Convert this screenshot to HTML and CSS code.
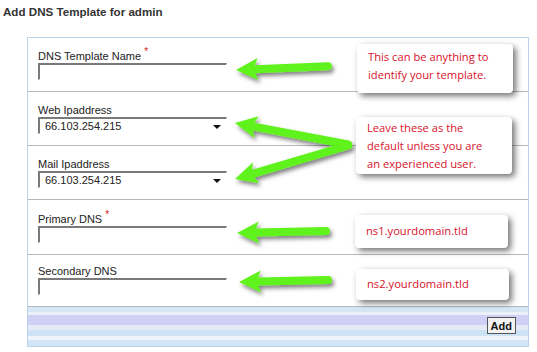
FILE: index.html
```html
<!DOCTYPE html>
<html>
<head>
<meta charset="utf-8">
<link rel="stylesheet" href="styles.css">
</head>
<body>
<h1 class="title">Add DNS Template for admin</h1>
<div class="panel">
  <div class="row">
    <label class="lbl">DNS Template Name <span class="req">*</span></label>
    <div class="input"></div>
  </div>
  <div class="row">
    <label class="lbl">Web Ipaddress</label>
    <div class="input select"><span class="val">66.103.254.215</span><span class="caret"></span></div>
  </div>
  <div class="row">
    <label class="lbl">Mail Ipaddress</label>
    <div class="input select"><span class="val">66.103.254.215</span><span class="caret"></span></div>
  </div>
  <div class="row">
    <label class="lbl">Primary DNS <span class="req">*</span></label>
    <div class="input"></div>
  </div>
  <div class="row">
    <label class="lbl">Secondary DNS</label>
    <div class="input"></div>
  </div>
  <div class="footer">
    <button class="btn">Add</button>
  </div>
</div>

<svg class="arrows" width="537" height="352" viewBox="0 0 537 352">
  <defs>
    <filter id="sh" x="-20%" y="-50%" width="140%" height="200%">
      <feDropShadow dx="2" dy="3" stdDeviation="2.2" flood-color="#000" flood-opacity="0.5"/>
    </filter>
  </defs>
  <g filter="url(#sh)" fill="#5ef21a">
    <g transform="translate(236,70) rotate(-2.4)"><path d="M0,0 L22,-11 L19,-4 L92,-4 A4,4 0 0 1 92,4 L19,4 L22,11 Z"/></g>
    <g transform="translate(235,123) rotate(10.8)"><path d="M0,0 L22,-11 L19,-4 L115,-4 A4,4 0 0 1 115,4 L19,4 L22,11 Z"/></g>
    <g transform="translate(235,179) rotate(-16.5)"><path d="M0,0 L22,-11 L19,-4 L118,-4 A4,4 0 0 1 118,4 L19,4 L22,11 Z"/></g>
    <g transform="translate(237,233) rotate(-1.3)"><path d="M0,0 L22,-11 L19,-4 L89,-4 A4,4 0 0 1 89,4 L19,4 L22,11 Z"/></g>
    <g transform="translate(239,282) rotate(-1.3)"><path d="M0,0 L22,-11 L19,-4 L89,-4 A4,4 0 0 1 89,4 L19,4 L22,11 Z"/></g>
  </g>
</svg>

<div class="callout c1">This can be anything to<br>identify your template.</div>
<div class="callout c2">Leave these as the<br>default unless you are<br>an experienced user.</div>
<div class="callout c3">ns1.yourdomain.tld</div>
<div class="callout c4">ns2.yourdomain.tld</div>
</body>
</html>
```

FILE: styles.css
```css
html, body {
  margin: 0;
  padding: 0;
  background: #ffffff;
}
body {
  position: relative;
  width: 537px;
  height: 352px;
  overflow: hidden;
  font-family: "Liberation Sans", Arial, sans-serif;
  font-size: 11px;
  color: #222;
}
.title {
  margin: 0;
  padding: 5px 0 0 3px;
  height: 37px;
  box-sizing: border-box;
  font-size: 11.6px;
  line-height: 13px;
  font-weight: bold;
  color: #333;
}
.panel {
  margin-left: 27px;
  width: 502px;
  box-sizing: border-box;
  border: 1px solid #b9d3ea;
  display: flex;
  flex-direction: column;
}
.row {
  height: 54px;
  box-sizing: border-box;
  border-bottom: 1px solid #b4b8bc;
  padding: 0 0 11px 10px;
  display: flex;
  flex-direction: column;
  justify-content: flex-end;
}
.row:nth-child(1) { height: 54px; }
.row:nth-child(4) { height: 55px; }
.row:nth-child(5) { height: 52px; }
.lbl {
  display: block;
  line-height: 13px;
  color: #222;
}
.req {
  color: #d42020;
  font-size: 10px;
  vertical-align: 5px;
  line-height: 0;
}
.input {
  width: 189px;
  height: 17px;
  box-sizing: border-box;
  border-top: 2px solid #7a7a7a;
  border-left: 2px solid #7a7a7a;
  border-right: 1px solid #fff;
  border-bottom: 1px solid #fff;
  background: #fff;
  position: relative;
}
.select .val {
  position: absolute;
  left: 5px;
  top: 0;
  line-height: 14px;
  color: #222;
}
.select .caret {
  position: absolute;
  right: 5px;
  top: 6px;
  width: 0;
  height: 0;
  border-left: 4px solid transparent;
  border-right: 4px solid transparent;
  border-top: 4px solid #111;
}
.footer {
  height: 39px;
  box-sizing: border-box;
  display: flex;
  justify-content: flex-end;
  align-items: flex-start;
  padding: 10px 12px 0 0;
  background: linear-gradient(to bottom,
    #d7e6f6 0px, #d7e6f6 5px,
    #ecf1f9 5px, #ecf1f9 8px,
    #cfd0f5 8px, #cfd0f5 18px,
    #e4eaf6 18px, #e4eaf6 23px,
    #cde2f4 23px, #cde2f4 29px,
    #eef4fa 29px, #eef4fa 33px,
    #d2e5f5 33px, #d2e5f5 39px);
}
.btn {
  font-family: "Liberation Sans", Arial, sans-serif;
  font-size: 11px;
  font-weight: bold;
  color: #111;
  background: #f2f2f2;
  border: 1px solid #555;
  padding: 0 3px;
  height: 17px;
  line-height: 14px;
  margin: 0;
}
.arrows {
  position: absolute;
  left: 0;
  top: 0;
}
.callout {
  position: absolute;
  box-sizing: border-box;
  background: #fff;
  border-radius: 4px;
  box-shadow: 3px 3px 6px rgba(0, 0, 0, 0.55);
  color: #d8122a;
  font-family: "Open Sans", "Noto Sans", sans-serif;
  font-size: 11.2px;
  line-height: 18px;
  padding: 4px 0 0 11px;
  white-space: nowrap;
}
.c1 { left: 357px; top: 44px; width: 156px; height: 49px; }
.c2 { left: 356px; top: 117px; width: 156px; height: 57px; padding-top: 2px; }
.c3 { left: 355px; top: 215px; width: 153px; height: 33px; padding-top: 7px; }
.c4 { left: 356px; top: 269px; width: 153px; height: 31px; padding-top: 6px; }
```
